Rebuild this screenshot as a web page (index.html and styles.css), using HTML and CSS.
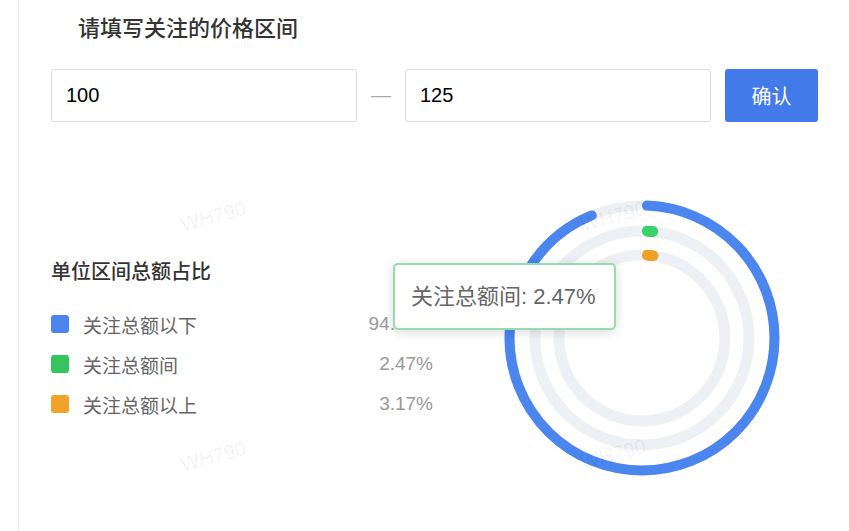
FILE: index.html
```html
<!DOCTYPE html>
<html lang="zh-CN">
<head>
    <meta charset="UTF-8">
    <meta name="viewport" content="width=device-width, initial-scale=1.0">
    <title>价格区间</title>
    <link rel="stylesheet" href="styles.css">
</head>
<body>

    <div class="page">
        <!-- 标题 -->
        <div class="page-title">请填写关注的价格区间</div>

        <!-- 价格区间输入 -->
        <div class="range-row">
            <input class="range-input" type="text" value="100">
            <span class="range-sep">—</span>
            <input class="range-input" type="text" value="125">
            <button class="btn-confirm">确认</button>
        </div>

        <!-- 图表区域 -->
        <div class="chart-section">
            <div class="legend">
                <div class="legend-title">单位区间总额占比</div>
                <div class="legend-item">
                    <span class="dot dot-blue"></span>
                    <span class="legend-name">关注总额以下</span>
                    <span class="legend-value">94.36%</span>
                </div>
                <div class="legend-item">
                    <span class="dot dot-green"></span>
                    <span class="legend-name">关注总额间</span>
                    <span class="legend-value">2.47%</span>
                </div>
                <div class="legend-item">
                    <span class="dot dot-orange"></span>
                    <span class="legend-name">关注总额以上</span>
                    <span class="legend-value">3.17%</span>
                </div>
            </div>

            <svg class="ring-chart" width="300" height="300" viewBox="0 0 300 300">
                <g transform="rotate(-90 150 150)" fill="none" stroke-linecap="round">
                    <!-- 外环 -->
                    <circle cx="150" cy="150" r="132.5" stroke="#edf0f5" stroke-width="10"></circle>
                    <circle cx="150" cy="150" r="132.5" stroke="#4a86ee" stroke-width="10"
                            stroke-dasharray="775.6 1000" stroke-dashoffset="-5"></circle>
                    <!-- 中环 -->
                    <circle cx="150" cy="150" r="107" stroke="#edf0f5" stroke-width="11"></circle>
                    <circle cx="150" cy="150" r="107" stroke="#38d16a" stroke-width="11"
                            stroke-dasharray="5.4 1000" stroke-dashoffset="-5.5"></circle>
                    <!-- 内环 -->
                    <circle cx="150" cy="150" r="83" stroke="#edf0f5" stroke-width="11"></circle>
                    <circle cx="150" cy="150" r="83" stroke="#f0a026" stroke-width="11"
                            stroke-dasharray="5.5 1000" stroke-dashoffset="-5.5"></circle>
                </g>
            </svg>

            <div class="chart-tooltip">关注总额间: 2.47%</div>
        </div>

        <!-- 水印 -->
        <span class="watermark wm-1">WH790</span>
        <span class="watermark wm-2">WH790</span>
        <span class="watermark wm-3">WH790</span>
        <span class="watermark wm-4">WH790</span>
    </div>

</body>
</html>
```

FILE: styles.css
```css
/* 基础样式 */
body {
    margin: 0;
    padding: 0;
    background-color: #fff;
    font-family: "Liberation Sans", "Noto Sans CJK SC", sans-serif;
    color: #333;
}

.page {
    position: relative;
    margin-left: 18px;
    height: 531px;
    border-left: 1px solid #e8e8e8;
    padding-left: 32px;
    overflow: hidden;
}

.page-title {
    padding-top: 14px;
    padding-left: 27px;
    font-size: 22px;
    line-height: 30px;
    font-weight: 500;
    color: #333;
}

/* 输入行 */
.range-row {
    display: flex;
    align-items: center;
    margin-top: 25px;
}

.range-input {
    box-sizing: border-box;
    width: 306px;
    height: 53px;
    padding: 0 14px;
    border: 1px solid #dcdcdc;
    border-radius: 3px;
    font-family: "Liberation Sans", sans-serif;
    font-size: 20px;
    color: #000;
    outline: none;
}

.range-sep {
    width: 48px;
    text-align: center;
    font-size: 20px;
    color: #aaa;
}

.btn-confirm {
    width: 93px;
    height: 53px;
    margin-left: 14px;
    border: none;
    border-radius: 3px;
    background-color: #437ae9;
    color: #fff;
    font-family: "Liberation Sans", "Noto Sans CJK SC", sans-serif;
    font-size: 20px;
    cursor: pointer;
}

/* 图表区域 */
.chart-section {
    position: relative;
    display: flex;
    margin-top: 66px;
}

.legend {
    width: 382px;
    padding-top: 70px;
}

.legend-title {
    font-size: 20px;
    line-height: 28px;
    font-weight: 500;
    color: #333;
    margin-bottom: 18px;
}

.legend-item {
    display: flex;
    align-items: center;
    height: 40px;
}

.dot {
    width: 18px;
    height: 18px;
    border-radius: 3px;
    margin-right: 14px;
}

.dot-blue { background-color: #4a86ee; }
.dot-green { background-color: #35c45e; }
.dot-orange { background-color: #f2a12a; }

.legend-name {
    flex: 1;
    font-size: 19px;
    color: #666;
}

.legend-value {
    font-size: 19px;
    color: #999;
}

.ring-chart {
    margin-left: 59px;
}

.chart-tooltip {
    position: absolute;
    left: 342px;
    top: 75px;
    box-sizing: border-box;
    width: 223px;
    height: 67px;
    padding-left: 16px;
    line-height: 63px;
    font-size: 22px;
    color: #666;
    background-color: #fff;
    border: 2px solid #95dcae;
    border-radius: 5px;
    box-shadow: 0 2px 12px rgba(0, 0, 0, 0.15);
}

/* 水印 */
.watermark {
    position: absolute;
    font-size: 20px;
    color: rgba(0, 0, 0, 0.06);
    transform: rotate(-15deg);
    pointer-events: none;
}

.wm-1 { left: 161px; top: 205px; }
.wm-2 { left: 561px; top: 205px; }
.wm-3 { left: 161px; top: 445px; }
.wm-4 { left: 561px; top: 443px; }
```
